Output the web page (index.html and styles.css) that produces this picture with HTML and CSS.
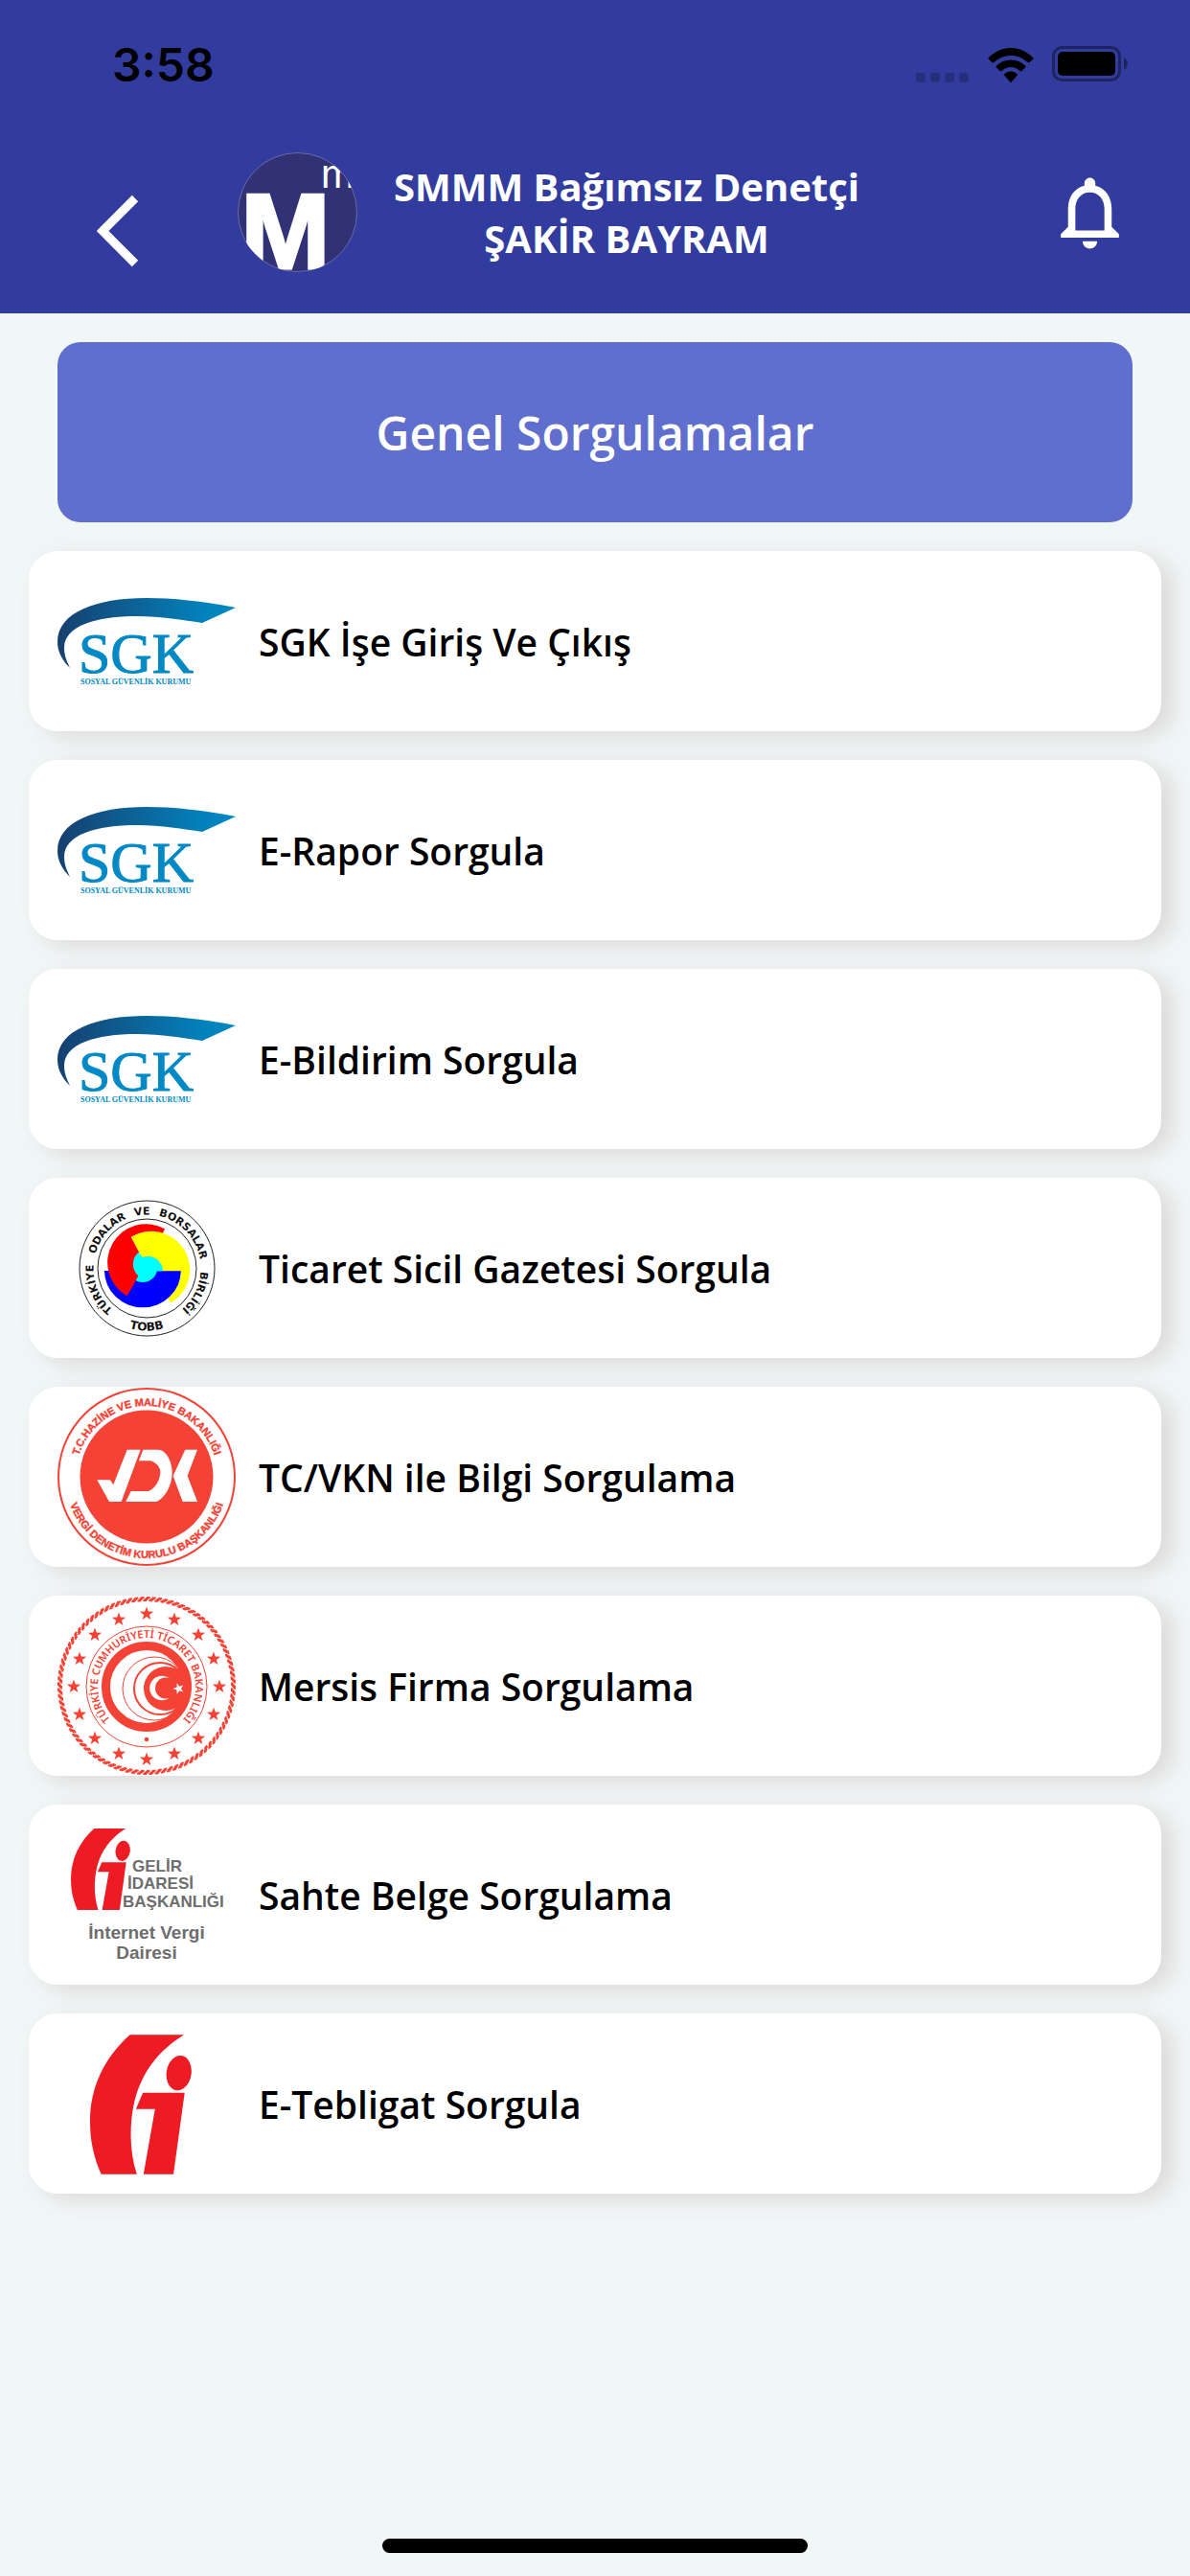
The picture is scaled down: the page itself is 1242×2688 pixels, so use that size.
FILE: index.html
```html
<!DOCTYPE html>
<html lang="tr">
<head>
<meta charset="utf-8">
<meta name="viewport" content="width=device-width, initial-scale=1">
<title>Genel Sorgulamalar</title>
<link rel="stylesheet" href="styles.css">
</head>
<body>
<svg class="defs" aria-hidden="true">
  <defs>
    <linearGradient id="sgk-blue" x1="0" x2="1" y1="0" y2="0">
      <stop offset="0" stop-color="#16406f"/>
      <stop offset="0.8" stop-color="#0380b9"/>
      <stop offset="1" stop-color="#0089c4"/>
    </linearGradient>
    <symbol id="sgk" viewBox="0 0 186 186">
      <path fill="url(#sgk-blue)" d="M186 58C150 51 120 48 93 48 40 48 0 63 0 94c0 11 6 20 13 27-4-8-6-14-6-21C7 77 40 67 83 67c26 0 48 4 68 7z"/>
      <text class="sgk-name" x="22" y="126">SGK</text>
      <text class="sgk-sub" x="24" y="138">SOSYAL GÜVENLİK KURUMU</text>
    </symbol>
    <symbol id="gi" viewBox="162 99 319 438">
      <path d="M287 99H457C375 150 326 215 302 306 285 375 285 465 309 537H197C172 480 162 430 162 370 162 262 208 170 287 99z"/>
      <path d="M328 281H459L424 537H330L366 332H306z"/>
      <ellipse cx="441" cy="219" rx="39" ry="55" transform="rotate(9 441 219)"/>
    </symbol>
    <path id="star" d="M0-7.500 1.800-2.400 7.100-2.300 2.900.9 4.400 6.100 0 3-4.400 6.100-2.900.9-7.100-2.300-1.800-2.400z"/>
    <path id="tobb-top" d="M93 149.500a56 56 0 1 1 1 0"/>
    <path id="tobb-bottom" d="M28 93.500a65 65 0 0 0 130 0"/>
    <path id="vdk-top" d="M19 93a74 74 0 0 1 148 0"/>
    <path id="vdk-bottom" d="M8 93a85 85 0 0 0 170 0"/>
    <path id="mersis-top" d="M92 145a51 51 0 1 1 2 0"/>
  </defs>
</svg>

<header class="header">
  <div class="status">
    <span class="time">3:58</span>
    <svg class="dots" viewBox="0 0 56 10" aria-hidden="true">
      <rect width="10" height="10" rx="3"/><rect x="15" width="10" height="10" rx="3"/><rect x="30" width="10" height="10" rx="3"/><rect x="45" width="10" height="10" rx="3"/>
    </svg>
    <svg class="wifi" viewBox="0 0 48 36" aria-hidden="true">
      <path d="M24 0c9 0 17 4 23 10 .8.700.8 1.300 0 2l-3.500 3c-.7.700-1.300.600-2 0C36.500 10.500 30.500 8 24 8S11.500 10.500 6.500 15c-.7.600-1.300.7-2 0L1 12c-.8-.7-.8-1.300 0-2C7 4 15 0 24 0z"/>
      <path d="M24 12.500c6 0 11 2.200 15 6 .7.700.7 1.300 0 2L35.500 24c-.6.600-1.200.6-2 0-3-2.500-6-4-9.500-4s-6.500 1.500-9.500 4c-.8.600-1.400.6-2 0L9 20.500c-.7-.7-.7-1.300 0-2 4-3.800 9-6 15-6z"/>
      <path d="M24 24.500c2.500 0 4.800.900 6.500 2.400.7.600.6 1.200.1 1.800L24.800 35.500c-.5.600-1.100.6-1.600 0L17.400 28.700c-.5-.6-.6-1.200.1-1.800 1.700-1.500 4-2.400 6.500-2.400z"/>
    </svg>
    <svg class="battery" viewBox="0 0 80 38" aria-hidden="true">
      <rect class="battery-shell" x="1.500" y="1.500" width="69" height="34" rx="9"/>
      <rect x="6" y="6" width="60" height="25" rx="5"/>
      <path class="battery-tip" d="M75 12c5 2 5 11 0 13z"/>
    </svg>
  </div>
  <div class="bar">
    <button class="icon-button back" type="button" aria-label="Geri">
      <svg viewBox="0 0 44 76"><path d="M40 4 6 38l34 34"/></svg>
    </button>
    <svg class="avatar" viewBox="0 0 125 125" role="img" aria-label="Logo">
      <clipPath id="round"><circle cx="62.500" cy="62.500" r="62"/></clipPath>
      <circle class="avatar-disc" cx="62.500" cy="62.500" r="62"/>
      <g clip-path="url(#round)">
        <text class="avatar-big" x="50" y="121">M</text>
        <text class="avatar-small" x="87" y="37">m</text>
      </g>
    </svg>
    <h1 class="title">SMMM Bağımsız Denetçi<br>ŞAKİR BAYRAM</h1>
    <button class="icon-button bell" type="button" aria-label="Bildirimler">
      <svg viewBox="0 0 24 24"><path d="M12 22c1.100 0 2-.9 2-2h-4c0 1.100.9 2 2 2zm6-6v-5c0-3.070-1.630-5.640-4.500-6.320V4c0-.83-.67-1.500-1.500-1.500s-1.500.67-1.500 1.500v.68C7.640 5.360 6 7.920 6 11v5l-2 2v1h16v-1l-2-2zm-2 1H8v-6c0-2.480 1.510-4.500 4-4.500s4 2.020 4 4.500v6z"/></svg>
    </button>
  </div>
</header>

<main class="content">
  <h2 class="banner">Genel Sorgulamalar</h2>
  <nav class="list">
    <a class="card" href="#sgk-ise-giris"><svg class="logo" viewBox="0 0 186 186"><use href="#sgk"/></svg>SGK İşe Giriş Ve Çıkış</a>
    <a class="card" href="#e-rapor"><svg class="logo" viewBox="0 0 186 186"><use href="#sgk"/></svg>E-Rapor Sorgula</a>
    <a class="card" href="#e-bildirim"><svg class="logo" viewBox="0 0 186 186"><use href="#sgk"/></svg>E-Bildirim Sorgula</a>
    <a class="card" href="#ticaret-sicil">
      <svg class="logo" viewBox="0 0 186 186">
        <g class="tobb-ring"><circle cx="93.500" cy="93.500" r="70.500"/><circle cx="93.500" cy="93.500" r="51.500"/></g>
        <g transform="scale(.3333)">
          <path fill="#00f" d="M147 288H387A120 115 0 0 1 147 288z"/>
          <path fill="#f00" d="M336 157A118 118 0 1 0 218 367L256 300V230L232 182A118 118 0 0 1 328 174z"/>
          <path fill="#ff0" d="M230 182A120 120 0 0 1 357 388L345 376Q385 342 387 289H300L264 245z"/>
          <path fill="#0ff" d="M254 230A42 46 0 0 0 253 304L245 319A47 47 0 0 0 312 289H330A47 47 0 0 0 266 246z"/>
        </g>
        <g class="tobb-text">
          <text><textPath href="#tobb-top" startOffset="38">TÜRKİYE</textPath></text>
          <text><textPath href="#tobb-top" startOffset="102">ODALAR</textPath></text>
          <text><textPath href="#tobb-top" startOffset="162">VE</textPath></text>
          <text><textPath href="#tobb-top" startOffset="187">BORSALAR</textPath></text>
          <text><textPath href="#tobb-top" startOffset="266">BİRLİĞİ</textPath></text>
        </g>
        <text class="tobb-name"><textPath href="#tobb-bottom" startOffset="50%">TOBB</textPath></text>
      </svg>Ticaret Sicil Gazetesi Sorgula</a>
    <a class="card" href="#tc-vkn">
      <svg class="logo red" viewBox="0 0 186 186">
        <circle class="line" cx="93" cy="93" r="92"/>
        <circle cx="93" cy="93" r="69.500"/>
        <g fill="#fff" transform="translate(-20 -18) scale(.3333)">
          <path d="M184 343H225L235 358 278 248H320L260 411H222z"/>
          <path d="M328 248H375C400 248 419 285 419 320 419 362 395 400 370 411H274L290 378H345C365 370 382 345 382 318 382 305 372 290 352 283H315z"/>
          <path d="M460 248H498L467 330 498 411H452L422 330z"/>
        </g>
        <text class="vdk-text"><textPath href="#vdk-top" startOffset="50%">T.C.HAZİNE VE MALİYE BAKANLIĞI</textPath></text>
        <text class="vdk-text"><textPath href="#vdk-bottom" startOffset="50%">VERGİ DENETİM KURULU BAŞKANLIĞI</textPath></text>
      </svg>TC/VKN ile Bilgi Sorgulama</a>
    <a class="card" href="#mersis">
      <svg class="logo red" viewBox="0 0 186 186">
        <g class="rope">
          <circle cx="93" cy="93" r="92" pathLength="184" stroke-dashoffset="0"/>
          <circle cx="93" cy="93" r="91" pathLength="184" stroke-dashoffset=".4"/>
          <circle cx="93" cy="93" r="90" pathLength="184" stroke-dashoffset=".8"/>
          <circle cx="93" cy="93" r="89" pathLength="184" stroke-dashoffset="1.200"/>
        </g>
        <g transform="translate(93 94)">
          <use href="#star" y="-76"/><use href="#star" x="29" y="-70"/><use href="#star" x="54" y="-54"/><use href="#star" x="70" y="-29"/>
          <use href="#star" x="76"/><use href="#star" x="70" y="29"/><use href="#star" x="54" y="54"/><use href="#star" x="29" y="70"/>
          <use href="#star" y="76"/><use href="#star" x="-29" y="70"/><use href="#star" x="-54" y="54"/><use href="#star" x="-70" y="29"/>
          <use href="#star" x="-76"/><use href="#star" x="-70" y="-29"/><use href="#star" x="-54" y="-54"/><use href="#star" x="-29" y="-70"/>
        </g>
        <circle class="line thin" cx="93" cy="94" r="63"/>
        <circle class="line thick" cx="93" cy="94" r="42.500"/>
        <circle class="line thin" cx="101" cy="96" r="33"/>
        <circle class="line" cx="107" cy="96" r="27"/>
        <circle cx="113" cy="96" r="23"/>
        <circle cx="109" cy="95.500" r="12.800" fill="#fff"/>
        <circle cx="113" cy="95.500" r="11"/>
        <use href="#star" transform="translate(126.500 96) rotate(-18) scale(.8)" fill="#fff"/>
        <circle cx="93" cy="149" r="2.300"/>
        <text class="mersis-text"><textPath href="#mersis-top" startOffset="50%">TÜRKİYE CUMHURİYETİ TİCARET BAKANLIĞI</textPath></text>
      </svg>Mersis Firma Sorgulama</a>
    <a class="card" href="#sahte-belge">
      <svg class="logo" viewBox="0 0 186 186">
        <use href="#gi" class="gi" x="14" y="24" width="62" height="85"/>
        <g class="gib-text">
          <text x="78" y="69">GELİR</text>
          <text x="73" y="87">İDARESİ</text>
          <text x="68" y="106">BAŞKANLIĞI</text>
        </g>
        <g class="gib-sub">
          <text x="93" y="139">İnternet Vergi</text>
          <text x="93" y="160">Dairesi</text>
        </g>
      </svg>Sahte Belge Sorgulama</a>
    <a class="card" href="#e-tebligat">
      <svg class="logo" viewBox="0 0 186 186"><use href="#gi" class="gi" x="34" y="21" width="106" height="146"/></svg>E-Tebligat Sorgula</a>
  </nav>
</main>
<div class="home"></div>
</body>
</html>
```

FILE: styles.css
```css
* {
  box-sizing: border-box;
}

body {
  display: flex;
  flex-direction: column;
  min-height: 100vh;
  margin: 0;
  background: #f1f7f7;
  color: #000;
  font-family: "Open Sans", "Noto Sans", sans-serif;
}

.defs {
  position: absolute;
  width: 0;
  height: 0;
}

/* Header */

.header {
  background: #323c9e;
}

.status {
  display: flex;
  align-items: flex-end;
  height: 86px;
  padding: 0 64px 0 117px;
}

.time {
  margin-right: auto;
  font: 600 48px/36px "Inter", sans-serif;
}

.dots {
  width: 56px;
  height: 10px;
  margin-right: 19px;
  opacity: 0.2;
}

.wifi {
  width: 48px;
  height: 36px;
  margin-right: 19px;
}

.battery {
  width: 80px;
  height: 38px;
}

.battery-shell {
  fill: none;
  stroke: #000;
  stroke-width: 3;
  opacity: 0.4;
}

.battery-tip {
  opacity: 0.4;
}

.bar {
  display: flex;
  align-items: center;
  height: 241px;
  padding: 30px 59px 0 101px;
}

.icon-button {
  display: block;
  padding: 0;
  border: 0;
  background: none;
}

.icon-button svg {
  display: block;
}

.back {
  padding-top: 38px;
}

.back svg {
  width: 44px;
  height: 76px;
  fill: none;
  stroke: #fff;
  stroke-width: 9;
}

.avatar {
  width: 125px;
  height: 125px;
  margin: 0 38px 0 103px;
}

.avatar-disc {
  fill: #313175;
  stroke: #6b6ba6;
}

.avatar text {
  fill: #fff;
}

.avatar-big {
  font: 700 112px "Liberation Sans", sans-serif;
  stroke: #fff;
  stroke-width: 3;
  text-anchor: middle;
}

.avatar-small {
  font: 42px "Liberation Sans", sans-serif;
}

.title {
  margin: 0;
  color: #fff;
  font-size: 40px;
  font-weight: 700;
  line-height: 54px;
  text-align: center;
}

.bell {
  margin-left: auto;
}

.bell svg {
  width: 91px;
  height: 91px;
  fill: #fff;
}

/* Content */

.content {
  padding: 30px;
}

.banner {
  display: flex;
  align-items: center;
  justify-content: center;
  height: 188px;
  margin: 0 30px 30px;
  border-radius: 24px;
  background: #606ecd;
  color: #fff;
  font-size: 48px;
  font-weight: 600;
}

.list {
  display: flex;
  flex-direction: column;
  gap: 30px;
}

.card {
  display: flex;
  align-items: center;
  gap: 24px;
  height: 188px;
  padding: 0 30px;
  border-radius: 30px;
  background: #fff;
  box-shadow: 12px 6px 24px #ddd8d8;
  color: #000;
  font-size: 39px;
  font-weight: 600;
  text-decoration: none;
}

.logo {
  flex: none;
  width: 186px;
  height: 186px;
}

/* Logos */

.sgk-name {
  fill: #0089c4;
  stroke: #0089c4;
  font: 60px "Liberation Serif", serif;
}

.sgk-sub {
  fill: #0089c4;
  font: 700 8px "Liberation Serif", serif;
}

.tobb-ring {
  fill: none;
  stroke: #222;
}

.tobb-text {
  fill: #111;
  font: 700 11px "DejaVu Sans", sans-serif;
}

.tobb-name {
  fill: #111;
  font: 700 12px "DejaVu Sans", sans-serif;
  text-anchor: middle;
}

.red {
  fill: #f44336;
}

.line {
  fill: none;
  stroke: #f44336;
  stroke-width: 2;
}

.thin {
  stroke-width: 1;
}

.thick {
  stroke-width: 9;
}

.rope {
  fill: none;
  stroke: #f44336;
  stroke-width: 2;
  stroke-dasharray: 1.2 0.8;
}

.vdk-text {
  font: 700 11px "Liberation Sans", sans-serif;
  stroke: #f44336;
  stroke-width: 0.4;
  text-anchor: middle;
}

.mersis-text {
  font: 600 11px "Noto Sans", sans-serif;
  text-anchor: middle;
}

.gi {
  fill: #ed1c24;
}

.gib-text {
  fill: #6d6d6d;
  font: 700 17px "Liberation Sans", sans-serif;
}

.gib-sub {
  fill: #6d6d6d;
  font: 700 19px "Liberation Sans", sans-serif;
  text-anchor: middle;
}

.home {
  width: 444px;
  height: 15px;
  margin: auto auto 24px;
  border-radius: 8px;
  background: #000;
}
```
